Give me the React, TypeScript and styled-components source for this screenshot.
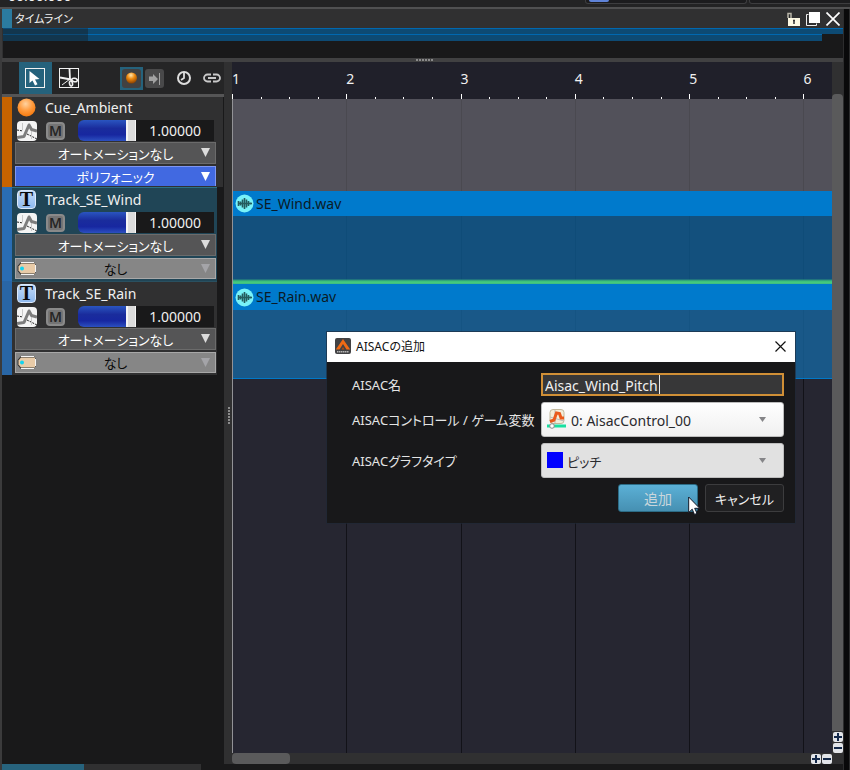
import React from "react";
import styled, { createGlobalStyle } from "styled-components";

const GlobalStyle = createGlobalStyle`
  *, *::before, *::after { box-sizing: border-box; }
  body { margin: 0; background: #19191a; }
  button, input, select { font: inherit; color: inherit; margin: 0; padding: 0; border: 0; border-radius: 0; outline: none; }
  body, button, input, select {
    font-family: "Noto Sans", "Noto Sans CJK JP", sans-serif;
    font-feature-settings: "palt";
  }
  svg { display: block; }
`;

const Screen = styled.div`
  position: relative;
  display: flex;
  flex-direction: column;
  min-height: 100vh;
  overflow: hidden;
  background: #19191a;
  color: #f0f0f0;
  font-size: 14px;
`;

/* ---- strip above the panel ---- */
const TopStrip = styled.div`
  display: flex;
  align-items: flex-start;
  justify-content: space-between;
  height: 7px;
  padding-left: 8px;
  overflow: hidden;
  background: #232324;
`;
const TimeCode = styled.span`
  margin-top: -14px;
  line-height: 20px;
  white-space: nowrap;
`;
const TopBoxes = styled.div`
  display: grid;
  grid-template-columns: 162px 103px;
  gap: 2px;
  margin-right: -2px;
`;
const TopBox = styled.div`
  height: 4px;
  padding-left: 3px;
  border: 1px solid #3d3d3f;
  border-top: 0;
  border-radius: 0 0 3px 3px;
  background: #1c1c1e;
`;
const TopChip = styled.div`
  width: 20px;
  height: 2px;
  border-radius: 0 0 2px 2px;
  background: #5f83d8;
`;

/* ---- docked panel ---- */
const Dock = styled.div`
  display: flex;
  flex: 1;
  border-top: 2px solid #505051;
`;
const Panel = styled.section`
  display: flex;
  flex: 1;
  flex-direction: column;
  min-width: 0;
  border-left: 2px solid #3b3b3c;
  background: #303031;
`;
const DockEdge = styled.div`
  width: 7px;
  border-left: 1px solid #2c2c2d;
  border-right: 1px solid #2c2c2d;
  background: #09090a;
`;
const TitleBar = styled.header`
  display: flex;
  align-items: center;
  height: 19px;
  background: #303031;
`;
const TitleMark = styled.span`
  align-self: stretch;
  width: 10px;
  background: #2b7ba0;
`;
const Title = styled.h1`
  flex: 1;
  margin: 0 0 0 3px;
  font-size: 11px;
  font-weight: 400;
  line-height: 18px;
`;
const IconButton = styled.button`
  display: grid;
  place-items: center;
  width: 20px;
  height: 18px;
  background: none;
`;
const Overview = styled.div`
  display: grid;
  grid-template-columns: 85px 1fr;
  align-content: start;
  height: 30px;
  margin-left: 1px;
  background: #19191a;
`;
const OverviewBar = styled.div<{ $dim?: boolean; $tall?: boolean; $short?: boolean }>`
  height: ${(p) => (p.$tall ? 7 : 6)}px;
  margin-right: ${(p) => (p.$short ? 21 : 0)}px;
  border-top: 1px solid ${(p) => (p.$dim ? "#0b4a77" : "#0068b0")};
  background: ${(p) => (p.$dim ? "#12364e" : "#0d4a73")};
`;
const HorizontalSplitter = styled.div`
  display: grid;
  place-items: center;
  height: 4px;
  padding-left: 4px;
  background: #414142;
`;
const Body = styled.div`
  display: grid;
  flex: 1;
  grid-template-columns: 222px 8px minmax(0, 1fr) 11px;
`;
const VerticalSplitter = styled.div`
  display: grid;
  place-items: center;
  padding: 4px 0 0 2px;
  background: #303031;
`;
const BottomTabs = styled.div`
  display: grid;
  grid-template-columns: 82px 117px;
  height: 6px;
  background: #19191a;
`;
const BottomTab = styled.div<{ $active?: boolean }>`
  background: ${(p) => (p.$active ? "#27637d" : "#303031")};
`;

/* ---- tracks ---- */
const Sidebar = styled.aside`
  background: #19191a;
`;
const Toolbar = styled.div`
  display: flex;
  align-items: center;
  height: 35px;
  padding-left: 17px;
  border-bottom: 3px solid #555556;
  background: #252526;
`;
const ToolButton = styled.button<{ $active?: boolean }>`
  display: grid;
  place-items: center;
  width: ${(p) => (p.$active ? 33 : 34)}px;
  height: 32px;
  padding-right: ${(p) => (p.$active ? 1 : 0)}px;
  background: ${(p) => (p.$active ? "#25627c" : "none")};
`;
const ToolGroup = styled.div`
  display: flex;
  align-items: center;
  margin-left: 34px;
`;
const SmallTool = styled.button<{ $active?: boolean }>`
  display: grid;
  place-items: center;
  width: 23px;
  height: 23px;
  background: ${(p) => (p.$active ? "#25627c" : "none")};
`;
const PlainTool = styled.button`
  display: grid;
  place-items: center;
  width: 24px;
  height: 23px;
  background: none;
`;
const PlainTools = styled.div`
  display: flex;
  gap: 4px;
  margin-left: 6px;
`;
const Track = styled.article<{ $stripe: string; $selected?: boolean; $first?: boolean }>`
  display: grid;
  grid-template-rows: 23px 21px 22px auto;
  margin-right: ${(p) => (p.$first ? 1 : 7)}px;
  padding: ${(p) => (p.$first ? "0 7px 1px 13px" : "2px 1px 2px 13px")};
  background: ${(p) => (p.$selected ? "#204556" : "#303031")};
  box-shadow:
    inset 10px 0 ${(p) => p.$stripe},
    inset 0 ${(p) => (p.$first ? 0 : 1)}px ${(p) => (p.$selected ? "#2b7187" : "#2a5060")};
`;
const TrackHead = styled.div`
  display: grid;
  grid-template-columns: 28px 1fr;
  align-items: center;
  padding-left: 2px;
  padding-bottom: 2px;
`;
const TrackName = styled.h2`
  margin: 0;
  font-size: 14px;
  font-weight: 400;
  line-height: 20px;
`;
const TrackLevel = styled.div`
  display: grid;
  grid-template-columns: 29px 32px 58px 1fr;
  align-items: center;
  padding: 0 2px;
`;
const MuteButton = styled.button`
  width: 19px;
  height: 18px;
  border: 2px solid #8a8a8a;
  border-radius: 4px;
  background: #747475;
  color: #262626;
  font-size: 14px;
  font-weight: 600;
  line-height: 14px;
`;
const Slider = styled.input`
  appearance: none;
  width: 58px;
  height: 21px;
  border-radius: 6px 0 0 6px;
  background: linear-gradient(#2a55c0, #1a2c9c 40%, #1727a0 70%, #2c50c0);
  overflow: hidden;
  &::-webkit-slider-thumb {
    appearance: none;
    width: 10px;
    height: 21px;
    border: 1px solid #f5f5f5;
    border-width: 0 1px 0 2px;
    background: #dcdcdc;
  }
`;
const LevelValue = styled.input`
  width: 100%;
  height: 21px;
  padding-right: 13px;
  background: #19191a;
  text-align: right;
`;
const SelectWrap = styled.div<{ $gap?: boolean }>`
  position: relative;
  margin-top: ${(p) => (p.$gap ? 3 : 1)}px;
`;
const TrackSelect = styled.select<{ $tone: "gray" | "blue" | "light" }>`
  appearance: none;
  display: block;
  width: 100%;
  height: ${(p) => (p.$tone === "gray" ? 22 : p.$tone === "blue" ? 20 : 21)}px;
  padding-top: ${(p) => (p.$tone === "gray" ? 2 : 0)}px;
  border: 1px solid;
  border-bottom-width: ${(p) => (p.$tone === "blue" ? 0 : 1)}px;
  border-color: ${(p) => ({ gray: "#6b6b6b", blue: "#7f97f2", light: "#a8a8a8" })[p.$tone]};
  background: ${(p) => ({ gray: "#555556", blue: "#4169e1", light: "#868686" })[p.$tone]};
  color: ${(p) => (p.$tone === "light" ? "#0a0a0a" : "#ffffff")};
  font-size: 13px;
  line-height: 18px;
  text-align-last: center;
`;
const SelectArrow = styled.svg`
  position: absolute;
  top: 6px;
  right: 6px;
  pointer-events: none;
`;
const TagIcon = styled.svg`
  position: absolute;
  top: 4px;
  left: 2px;
  pointer-events: none;
`;

/* ---- timeline ---- */
const Timeline = styled.div`
  display: flex;
  flex-direction: column;
  min-width: 0;
`;
const Ruler = styled.div`
  display: grid;
  grid-template-columns: repeat(5, 4fr) 1fr;
  height: 37px;
  overflow: hidden;
  background: #20202a;
`;
const RulerCell = styled.div`
  display: flex;
  flex-direction: column;
  justify-content: flex-end;
  min-width: 0;
  line-height: 20px;
`;
const Ticks = styled.div<{ $count: number }>`
  display: grid;
  grid-template-columns: repeat(${(p) => p.$count}, 1fr);
  align-items: end;
  height: 5px;
  margin-top: 5px;
`;
const Tick = styled.span<{ $major?: boolean }>`
  height: ${(p) => (p.$major ? 5 : 2)}px;
  border-left: 1px solid #ffffff;
`;
const Lanes = styled.div`
  position: relative;
  flex: 1;
  background: #262631;
`;
const GridLines = styled.div`
  position: absolute;
  inset: 0;
  display: grid;
  grid-template-columns: repeat(5, 4fr) 1fr;
`;
const GridColumn = styled.div`
  border-left: 1px solid #121218;
  &:first-child { border-left-color: #929296; }
`;
const LaneList = styled.div`
  position: relative;
  padding-left: 1px;
`;
const CueLane = styled.div`
  height: 92px;
  background: rgba(111, 110, 119, 0.6);
`;
const Clip = styled.div<{ $last?: boolean }>`
  display: grid;
  grid-template-rows: ${(p) => (p.$last ? "26px 69px" : "25px 68px")};
`;
const ClipHead = styled.div`
  display: flex;
  align-items: center;
  gap: 2px;
  padding-left: 2px;
  background: #007acc;
  color: #0b1a26;
  line-height: 24px;
`;
const ClipBody = styled.div<{ $last?: boolean }>`
  border-bottom: ${(p) => (p.$last ? "1px solid #0078c8" : "0")};
  background: ${(p) =>
    p.$last
      ? "rgba(23, 101, 159, 0.8)"
      : "linear-gradient(transparent 63px, #2b967c 64px, #45d07c 66px, #3fb884 68px), rgba(15, 91, 145, 0.8)"};
`;
const ScrollX = styled.div`
  display: flex;
  justify-content: space-between;
  align-items: center;
  height: 11px;
  background: #303031;
`;
const ThumbX = styled.div`
  width: 58px;
  height: 11px;
  border-radius: 4px;
  background: #5a5a5b;
`;
const ScrollY = styled.div`
  display: flex;
  flex-direction: column;
  gap: 1px;
  padding: 32px 0 11px;
  align-items: center;
  background: #303031;
`;
const ThumbY = styled.div`
  flex: 1;
  width: 11px;
  border-radius: 4px 4px 0 0;
  background: #5a5a5b;
`;
const ZoomButtons = styled.div`
  display: flex;
  gap: 1px;
`;
const ZoomButton = styled.button`
  display: grid;
  place-items: center;
  width: 10px;
  height: 10px;
  border-radius: 2px;
  background: #e2e4e8;
`;

/* ---- dialog ---- */
const Dialog = styled.div`
  position: absolute;
  top: 332px;
  left: 327px;
  width: 468px;
  background: #18181a;
  box-shadow: 0 0 0 1px rgba(30, 40, 55, 0.6);
`;
const DialogTitle = styled.header`
  display: flex;
  align-items: center;
  gap: 5px;
  height: 30px;
  padding: 0 5px 2px 8px;
  background: #ffffff;
  color: #111111;
`;
const DialogName = styled.h2`
  flex: 1;
  margin: 0;
  padding-top: 2px;
  font-size: 12px;
  font-weight: 400;
  line-height: 18px;
`;
const DialogForm = styled.form`
  display: grid;
  grid-template-columns: 189px minmax(0, 1fr);
  gap: 6px 0;
  align-items: center;
  padding: 11px 11px 11px 25px;
`;
const FieldLabel = styled.label`
  color: #e4e4e4;
  font-size: 13px;
  line-height: 20px;
  white-space: nowrap;
`;
const NameField = styled.div`
  position: relative;
`;
const NameInput = styled.input`
  display: block;
  width: 100%;
  height: 23px;
  padding: 1px 2px 0;
  border: 2px solid #d08f36;
  background: #373738;
  caret-color: transparent;
`;
const Caret = styled.span`
  position: absolute;
  top: 2px;
  left: 118px;
  width: 1px;
  height: 19px;
  background: #e8e8e8;
`;
const FieldWrap = styled.div`
  position: relative;
`;
const FieldSelect = styled.select<{ $indent: number; $plain?: boolean }>`
  appearance: none;
  display: block;
  width: 100%;
  height: 35px;
  padding: 2px 0 0 ${(p) => p.$indent}px;
  border: 1px solid #bdbdbd;
  border-radius: 3px;
  background: ${(p) => (p.$plain ? "#e1e1e1" : "linear-gradient(#ffffff, #f0f0f0)")};
  color: #2a2a2e;
  font-size: ${(p) => (p.$plain ? 13 : 14)}px;
`;
const FieldIcon = styled.svg`
  position: absolute;
  top: 7px;
  left: 6px;
  pointer-events: none;
`;
const FieldArrow = styled.svg`
  position: absolute;
  top: 15px;
  right: 18px;
  pointer-events: none;
`;
const DialogActions = styled.div`
  grid-column: 1 / -1;
  display: flex;
  justify-content: flex-end;
  gap: 7px;
`;
const DialogButton = styled.button<{ $primary?: boolean }>`
  width: ${(p) => (p.$primary ? 80 : 79)}px;
  height: 28px;
  border: 1px solid ${(p) => (p.$primary ? "#2c6c86" : "#3c3c3e")};
  border-radius: 3px;
  background: ${(p) => (p.$primary ? "linear-gradient(#5bb0d6, #4690b2)" : "#202022")};
  color: ${(p) => (p.$primary ? "#c9d6dc" : "#f0f0f0")};
  font-size: ${(p) => (p.$primary ? 14 : 13)}px;
`;
const Pointer = styled.svg`
  position: absolute;
  top: 164px;
  left: 361px;
`;

function SplitterDots({ vertical }: { vertical?: boolean }) {
  const dots = [0, 3, 6, 9, 12, 15];
  return (
    <svg width={vertical ? 2 : 17} height={vertical ? 17 : 2} fill="#8b8b8b" aria-hidden="true">
      {dots.map((d) => (
        <rect key={d} x={vertical ? 0 : d} y={vertical ? d : 0} width="2" height="2" />
      ))}
    </svg>
  );
}

function CurveIcon() {
  return (
    <svg width="20" height="20" viewBox="0 0 20 20" aria-hidden="true">
      <rect width="20" height="20" rx="4" fill="#f4f4f4" />
      <path d="M0 9 6 10M10 13 20 18" stroke="#222" strokeWidth="1" strokeDasharray="2 1" />
      <path d="M5.500 2v7M14.500 10v8" stroke="#c9c9c9" strokeWidth="1" />
      <path d="M0 16.500 7 15.500 12 4 14.500 8.500 20 10" fill="none" stroke="#7d7d7d" strokeWidth="3" strokeLinejoin="round" />
    </svg>
  );
}

const CueIcon = () => (
  <svg width="19" height="19" viewBox="0 0 19 19" aria-hidden="true">
    <defs>
      <radialGradient id="cue" cx="45%" cy="30%" r="65%">
        <stop offset="0" stopColor="#ffd2a0" />
        <stop offset="0.6" stopColor="#ff9a3c" />
        <stop offset="1" stopColor="#f77f16" />
      </radialGradient>
    </defs>
    <circle cx="9.500" cy="9.500" r="9" fill="url(#cue)" />
  </svg>
);

const TypeMark = styled.span`
  display: grid;
  place-items: center;
  width: 19px;
  height: 19px;
  border: 1px solid #dce9fa;
  border-radius: 4px;
  background: linear-gradient(#c2daf8, #8fb9ee);
  color: #0a0a0a;
  font-family: "Liberation Serif", serif;
  font-size: 20px;
  font-weight: 700;
  line-height: 17px;
`;

const WaveIcon = () => (
  <svg width="19" height="19" viewBox="0 0 19 19" aria-hidden="true">
    <circle cx="9.500" cy="9.500" r="9" fill="#78f2f8" />
    <path
      d="M3.500 7v5M5.500 7.500v4M7.500 5.500v8M9.500 4v11M11.500 5.500v8M13.500 7v5M15.500 8.500v2M3 9.500h14"
      stroke="#245c5e"
      strokeWidth="1.600"
    />
  </svg>
);

const DownArrow = ({ fill }: { fill: string }) => (
  <SelectArrow width="9" height="9" viewBox="0 0 9 9" aria-hidden="true">
    <path d="M0 0h9L4.500 9z" fill={fill} />
  </SelectArrow>
);

const PlusMinus = ({ plus }: { plus?: boolean }) => (
  <svg width="8" height="8" viewBox="0 0 8 8" aria-hidden="true">
    <path d={plus ? "M0 4h8M4 0v8" : "M0 4h8"} stroke="#14294a" strokeWidth="2" />
  </svg>
);

type TrackData = { name: string; kind: "cue" | "track"; stripe: string; selected?: boolean; option: string };

const tracks: TrackData[] = [
  { name: "Cue_Ambient", kind: "cue", stripe: "#c66300", option: "ポリフォニック" },
  { name: "Track_SE_Wind", kind: "track", stripe: "#2a6db4", selected: true, option: "なし" },
  { name: "Track_SE_Rain", kind: "track", stripe: "#2966a6", option: "なし" },
];

function TrackCard({ track }: { track: TrackData }) {
  const cue = track.kind === "cue";
  return (
    <Track $stripe={track.stripe} $selected={track.selected} $first={cue}>
      <TrackHead>
        {cue ? <CueIcon /> : <TypeMark>T</TypeMark>}
        <TrackName>{track.name}</TrackName>
      </TrackHead>
      <TrackLevel>
        <CurveIcon />
        <MuteButton type="button" aria-label={`${track.name} mute`}>M</MuteButton>
        <Slider type="range" min="0" max="1" step="0.01" defaultValue="1" aria-label={`${track.name} volume`} />
        <LevelValue defaultValue="1.00000" aria-label={`${track.name} volume value`} />
      </TrackLevel>
      <SelectWrap>
        <TrackSelect $tone="gray" aria-label={`${track.name} automation`}>
          <option>オートメーションなし</option>
        </TrackSelect>
        <DownArrow fill="#dcdcdc" />
      </SelectWrap>
      <SelectWrap $gap>
        <TrackSelect $tone={cue ? "blue" : "light"} aria-label={`${track.name} mode`}>
          <option>{track.option}</option>
        </TrackSelect>
        {!cue && (
          <TagIcon width="19" height="13" viewBox="0 0 19 13" aria-hidden="true">
            <path d="M3.500 .5H17l1.500 2v8l-1.500 2H3.500L.5 9V4z" fill="#333333" />
            <path d="M4 .5h13M4 12.500h13M18.500 3v7" stroke="#f4f4f4" />
            <path d="M4 1.500h14v10H4L1.500 8.500v-4z" fill="#e8cba8" />
            <circle cx="5" cy="6.500" r="2" fill="#12d4f0" />
          </TagIcon>
        )}
        <DownArrow fill={cue ? "#ffffff" : "#a4a4a8"} />
      </SelectWrap>
    </Track>
  );
}

function Tools() {
  return (
    <Toolbar>
      <ToolButton type="button" $active aria-label="Select">
        <svg width="20" height="20" viewBox="0 0 20 20">
          <rect x=".5" y=".5" width="19" height="19" fill="none" stroke="#f2f2f2" />
          <path d="M4.500 3v12l3-2.500 2.500 5 2.500-1.300-2.500-4.700 4.500-.5z" fill="#fff" />
        </svg>
      </ToolButton>
      <ToolButton type="button" aria-label="Cut">
        <svg width="20" height="20" viewBox="0 0 20 20" fill="none" stroke="#f2f2f2">
          <rect x=".5" y=".5" width="19" height="19" />
          <path d="M10.500 1 11 11M1 9.500 12 11.500" strokeWidth="1.800" />
          <ellipse cx="15.500" cy="12" rx="2.800" ry="1.700" transform="rotate(12 15.500 12)" strokeWidth="1.600" />
          <ellipse cx="12" cy="15.500" rx="1.500" ry="2.600" transform="rotate(-10 12 15.500)" strokeWidth="1.600" />
          <path d="M3 17 11 11" strokeWidth="1" />
        </svg>
      </ToolButton>
      <ToolGroup>
        <SmallTool type="button" $active aria-label="Cue">
          <svg width="19" height="19" viewBox="0 0 19 19">
            <defs>
              <radialGradient id="orb" cx="45%" cy="25%" r="75%">
                <stop offset="0" stopColor="#ffe7b0" />
                <stop offset="0.45" stopColor="#ee8a10" />
                <stop offset="1" stopColor="#8a4000" />
              </radialGradient>
            </defs>
            <rect width="19" height="19" rx="3" fill="#414142" />
            <circle cx="9.500" cy="9" r="5.500" fill="url(#orb)" />
          </svg>
        </SmallTool>
        <SmallTool type="button" aria-label="Step">
          <svg width="19" height="19" viewBox="0 0 19 19">
            <rect width="19" height="19" rx="3" fill="#49494a" />
            <path d="M4 7.500h4V5l5 5-5 5v-3H4z" fill="#a2a2a2" />
            <path d="M14.500 4v12" stroke="#a2a2a2" />
          </svg>
        </SmallTool>
        <PlainTools>
          <PlainTool type="button" aria-label="Clock">
            <svg width="16" height="16" viewBox="0 0 16 16" fill="none" stroke="#dddddd" strokeWidth="2">
              <circle cx="8" cy="8" r="6" />
              <path d="M8 3v5L5 10" strokeWidth="1.800" />
            </svg>
          </PlainTool>
          <PlainTool type="button" aria-label="Link">
            <svg width="18" height="10" viewBox="0 0 18 10" fill="none" stroke="#c8c8c8" strokeWidth="1.800">
              <path d="M8 1.500H4.500a3.500 3.500 0 0 0 0 7H8M10 1.500h3.500a3.500 3.500 0 0 1 0 7H10M5 5h8" />
            </svg>
          </PlainTool>
        </PlainTools>
      </ToolGroup>
    </Toolbar>
  );
}

const WaveClip = ({ name, last }: { name: string; last?: boolean }) => (
  <Clip $last={last}>
    <ClipHead>
      <WaveIcon />
      {name}
    </ClipHead>
    <ClipBody $last={last} />
  </Clip>
);

function AisacDialog() {
  return (
    <Dialog role="dialog" aria-labelledby="aisac-title">
      <DialogTitle>
        <svg width="16" height="16" viewBox="0 0 16 16" aria-hidden="true">
          <rect width="16" height="16" rx="2" fill="#424244" />
          <path d="M8 1 .8 11.500h3.700L8 6l3.500 5.500h3.700z" fill="#f06a14" />
          <path d="M6.500 11.500h3L8 9z" fill="#b84a0c" />
          <path d="M2 13.700h12" stroke="#b5b5b5" strokeWidth="1.500" strokeDasharray="1.500 .5" />
        </svg>
        <DialogName id="aisac-title">AISACの追加</DialogName>
        <IconButton type="button" aria-label="Close">
          <svg width="11" height="11" viewBox="0 0 11 11">
            <path d="m.5.5 10 10m0-10-10 10" stroke="#111" strokeWidth="1.200" />
          </svg>
        </IconButton>
      </DialogTitle>
      <DialogForm onSubmit={(e) => e.preventDefault()}>
        <FieldLabel htmlFor="aisac-name">AISAC名</FieldLabel>
        <NameField>
          <NameInput id="aisac-name" defaultValue="Aisac_Wind_Pitch" />
          <Caret />
        </NameField>
        <FieldLabel htmlFor="aisac-control">AISACコントロール / ゲーム変数</FieldLabel>
        <FieldWrap>
          <FieldSelect id="aisac-control" $indent={29}>
            <option>0: AisacControl_00</option>
          </FieldSelect>
          <FieldIcon width="20" height="20" viewBox="0 0 20 20" aria-hidden="true">
            <rect x="3" y=".5" width="14" height="14" rx="3" fill="#f4ecd8" stroke="#c2b89c" />
            <path d="M3 8l14 4M8 1v13" stroke="#b9b9b9" />
            <path d="M3 12.500 7 11 9.500 4 12.500 4.500 14 9 17 9" fill="none" stroke="#ea5a1c" strokeWidth="3" />
            <path d="M0 17h19" stroke="#19e0a0" strokeWidth="3" />
            <circle cx="5" cy="17" r="2.300" fill="#fff" stroke="#8a8a8a" />
          </FieldIcon>
          <FieldArrow width="7" height="5" viewBox="0 0 7 5"><path d="M0 0h7L3.500 5z" fill="#858588" /></FieldArrow>
        </FieldWrap>
        <FieldLabel htmlFor="aisac-graph">AISACグラフタイプ</FieldLabel>
        <FieldWrap>
          <FieldSelect id="aisac-graph" $indent={25} $plain>
            <option>ピッチ</option>
          </FieldSelect>
          <FieldIcon width="16" height="20" viewBox="0 0 16 20" aria-hidden="true">
            <rect y="2" width="16" height="16" fill="#0000ff" />
          </FieldIcon>
          <FieldArrow width="7" height="5" viewBox="0 0 7 5"><path d="M0 0h7L3.500 5z" fill="#858588" /></FieldArrow>
        </FieldWrap>
        <DialogActions>
          <DialogButton type="submit" $primary>追加</DialogButton>
          <DialogButton type="button">キャンセル</DialogButton>
        </DialogActions>
      </DialogForm>
      <Pointer width="13" height="20" viewBox="0 0 13 20" aria-hidden="true">
        <path d="M.7 1v15.500l3.500-3.300 2.300 5.300 2.500-1.100-2.300-5.100h5z" fill="#fff" stroke="#111827" strokeWidth="1" />
      </Pointer>
    </Dialog>
  );
}

export default function App() {
  const beats = [1, 2, 3, 4, 5, 6];
  return (
    <Screen>
      <GlobalStyle />
      <TopStrip>
        <TimeCode>00:00.000</TimeCode>
        <TopBoxes>
          <TopBox><TopChip /></TopBox>
          <TopBox />
        </TopBoxes>
      </TopStrip>
      <Dock>
        <Panel>
          <TitleBar>
            <TitleMark />
            <Title>タイムライン</Title>
            <IconButton type="button" aria-label="Lock">
              <svg width="13" height="14" viewBox="0 0 13 14">
                <path d="M1 6V1.500h3V7" fill="none" stroke="#b8b5a8" strokeWidth="1.500" />
                <rect x="1" y="6" width="12" height="8" fill="#fdf9e4" />
                <path d="M7 8v4M6 8.500h2" stroke="#333" strokeWidth="1.500" />
              </svg>
            </IconButton>
            <IconButton type="button" aria-label="Float">
              <svg width="14" height="14" viewBox="0 0 14 14">
                <path d="M2.500 2.500h-2v11h10v-2" fill="none" stroke="#eee" />
                <rect x="3" y="0" width="11" height="11" fill="#fff" />
              </svg>
            </IconButton>
            <IconButton type="button" aria-label="Close panel">
              <svg width="14" height="14" viewBox="0 0 14 14">
                <path d="m.5.5 13 13m0-13-13 13" stroke="#fff" strokeWidth="1.700" />
              </svg>
            </IconButton>
          </TitleBar>
          <Overview>
            <OverviewBar $dim />
            <OverviewBar />
            <OverviewBar $dim $tall />
            <OverviewBar $tall $short />
          </Overview>
          <HorizontalSplitter><SplitterDots /></HorizontalSplitter>
          <Body>
            <Sidebar>
              <Tools />
              {tracks.map((t) => (
                <TrackCard key={t.name} track={t} />
              ))}
            </Sidebar>
            <VerticalSplitter><SplitterDots vertical /></VerticalSplitter>
            <Timeline>
              <Ruler>
                {beats.map((b) => (
                  <RulerCell key={b}>
                    {b}
                    <Ticks $count={b === 6 ? 1 : 4}>
                      <Tick $major />
                      {b !== 6 && [1, 2, 3].map((q) => <Tick key={q} />)}
                    </Ticks>
                  </RulerCell>
                ))}
              </Ruler>
              <Lanes>
                <GridLines>
                  {beats.map((b) => (
                    <GridColumn key={b} />
                  ))}
                </GridLines>
                <LaneList>
                  <CueLane />
                  <WaveClip name="SE_Wind.wav" />
                  <WaveClip name="SE_Rain.wav" last />
                </LaneList>
              </Lanes>
              <ScrollX>
                <ThumbX />
                <ZoomButtons>
                  <ZoomButton type="button" aria-label="Zoom in horizontally"><PlusMinus plus /></ZoomButton>
                  <ZoomButton type="button" aria-label="Zoom out horizontally"><PlusMinus /></ZoomButton>
                </ZoomButtons>
              </ScrollX>
            </Timeline>
            <ScrollY>
              <ThumbY />
              <ZoomButton type="button" aria-label="Zoom in vertically"><PlusMinus plus /></ZoomButton>
              <ZoomButton type="button" aria-label="Zoom out vertically"><PlusMinus /></ZoomButton>
            </ScrollY>
          </Body>
          <BottomTabs>
            <BottomTab $active />
            <BottomTab />
          </BottomTabs>
        </Panel>
        <DockEdge />
      </Dock>
      <AisacDialog />
    </Screen>
  );
}
